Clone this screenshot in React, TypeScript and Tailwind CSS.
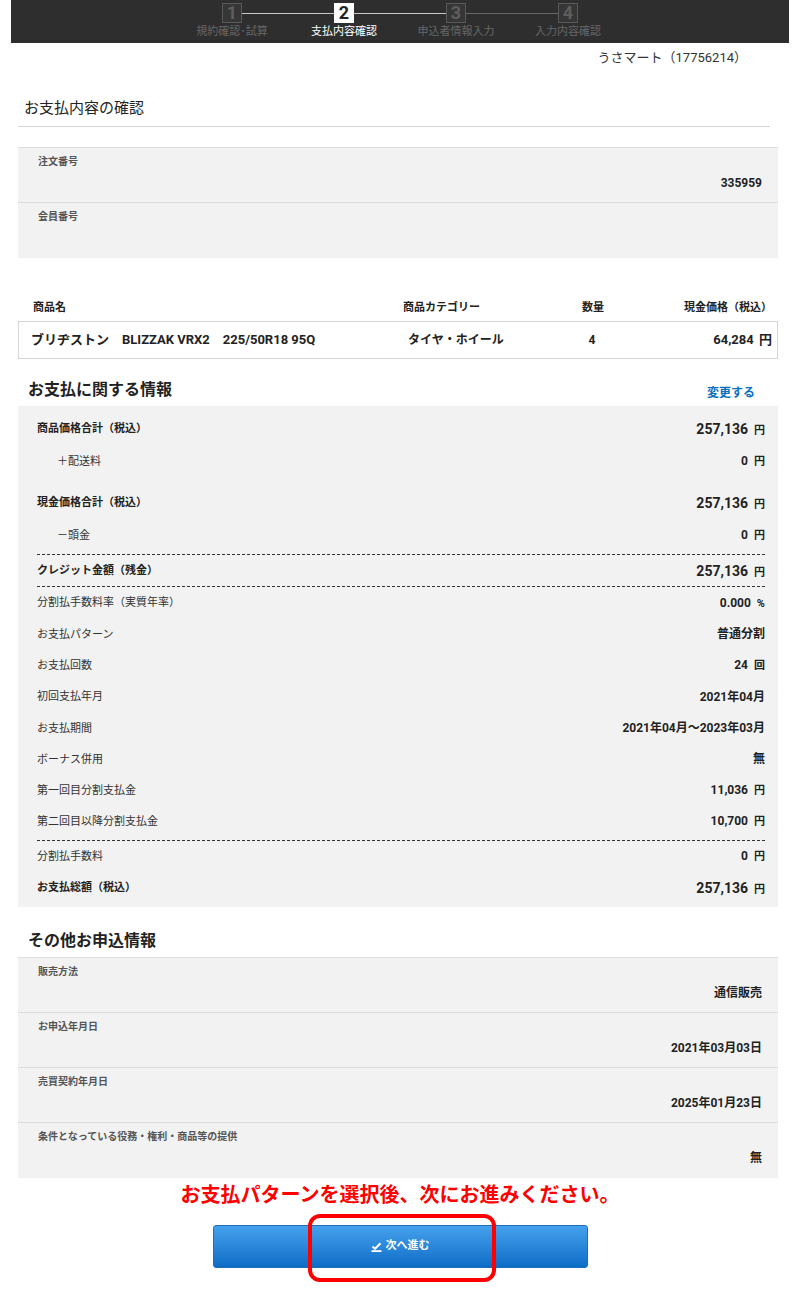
import { Fragment } from 'react';

const STEPS = [
  { no: '1', label: '規約確認･試算', state: 'done' },
  { no: '2', label: '支払内容確認', state: 'active' },
  { no: '3', label: '申込者情報入力', state: 'todo' },
  { no: '4', label: '入力内容確認', state: 'todo' },
];

function StepBar() {
  return (
    <div className="mx-[11px] h-[43px] bg-[#2e2e2e] pt-[3px]">
      <div className="flex items-center justify-center">
        {STEPS.map((s, i) => (
          <Fragment key={s.no}>
            {i > 0 && (
              <div className={i < 3 ? 'h-px w-[92px] bg-[#c8c8c8]' : 'h-px w-[92px] bg-[#666666]'} />
            )}
            <div
              className={
                s.state === 'active'
                  ? 'flex h-[20px] w-[20px] items-center justify-center bg-white text-[18px] font-bold leading-none text-[#222]'
                  : 'flex h-[20px] w-[20px] items-center justify-center border border-[#5a5a5a] bg-[#363636] text-[18px] font-bold leading-none text-[#5e5e5e]'
              }
            >
              {s.no}
            </div>
          </Fragment>
        ))}
      </div>
      <div className="mt-[2px] flex justify-center">
        {STEPS.map((s) => (
          <div
            key={s.no}
            className={
              s.state === 'active'
                ? 'w-[112px] text-center text-[11px] leading-[14px] text-white'
                : 'w-[112px] text-center text-[11px] leading-[14px] text-[#666]'
            }
          >
            {s.label}
          </div>
        ))}
      </div>
    </div>
  );
}

function InfoBox({ rows }: { rows: { label: string; value: string }[] }) {
  return (
    <div className="mx-[18px] w-[760px] border-t border-[#dddddd] bg-[#f2f2f2]">
      {rows.map((r, i) => (
        <div
          key={r.label}
          className={
            i < rows.length - 1
              ? 'h-[55px] border-b border-[#dddddd] pl-[20px] pr-[16px] pt-[7px]'
              : 'h-[55px] pl-[20px] pr-[16px] pt-[7px]'
          }
        >
          <div className="text-[10px] font-bold leading-[14px] text-[#555]">{r.label}</div>
          <div className="mt-[6px] h-[16px] text-right text-[12px] font-bold leading-[16px] text-[#222]">
            {r.value}
          </div>
        </div>
      ))}
    </div>
  );
}

type PayRowProps = {
  label: string;
  value: string;
  unit?: string;
  bold?: boolean;
  indent?: boolean;
  h: string;
};

function PayRow({ label, value, unit, bold, indent, h }: PayRowProps) {
  return (
    <div className={`flex items-center justify-between ${h}`}>
      <span
        className={
          bold
            ? 'text-[11px] font-bold leading-[14px] text-[#222]'
            : indent
              ? 'pl-[20px] text-[11px] leading-[14px] text-[#333]'
              : 'text-[11px] leading-[14px] text-[#333]'
        }
      >
        {label}
      </span>
      <span className="flex items-baseline font-bold text-[#222]">
        <span className={bold ? 'text-[14px] leading-[18px]' : 'text-[12px] leading-[15px]'}>{value}</span>
        {unit && <span className="ml-[6px] text-[11px] leading-[14px]">{unit}</span>}
      </span>
    </div>
  );
}

function Dash({ mt }: { mt: string }) {
  return <div className={`border-t border-dashed border-[#333] ${mt}`} />;
}

function CheckIcon() {
  return (
    <svg width="11" height="10" viewBox="0 0 11 10" className="mr-[4px]">
      <path d="M1.5 4.5 L4 6.8 L9.5 1.2" fill="none" stroke="white" strokeWidth="2" />
      <rect x="0.5" y="8.2" width="10" height="1.8" fill="white" />
    </svg>
  );
}

export default function App() {
  return (
    <div className="relative min-h-[1309px] w-[800px] bg-white font-['Roboto','Noto_Sans_CJK_JP',sans-serif] text-[#222]">
      <StepBar />

      <div className="mt-[5px] pr-[53px] text-right text-[13px] leading-[20px] text-[#333]">
        うさマート（17756214）
      </div>

      <div className="ml-[18px] mr-[30px] mt-[30px] border-b border-[#d6d6d6] pb-[8px] pl-[6px] text-[15px] leading-[20px] text-[#222]">
        お支払内容の確認
      </div>

      <div className="mt-[20px]">
        <InfoBox
          rows={[
            { label: '注文番号', value: '335959' },
            { label: '会員番号', value: '' },
          ]}
        />
      </div>

      {/* 商品テーブル */}
      <div className="mx-[18px] mt-[42px] w-[760px]">
        <div className="flex pl-[15px] text-[11px] font-bold leading-[16px] text-[#222]">
          <div className="w-[370px]">商品名</div>
          <div className="w-[140px]">商品カテゴリー</div>
          <div className="w-[100px] text-center">数量</div>
          <div className="flex-1 pr-[6px] text-right">現金価格（税込）</div>
        </div>
        <div className="mt-[5px] flex h-[38px] items-center border border-[#d6d6d6] pl-[12px] text-[13px] font-bold leading-[18px] text-[#222]">
          <div className="w-[377px]">ブリヂストン　BLIZZAK VRX2　225/50R18 95Q</div>
          <div className="w-[135px] text-[12px]">タイヤ・ホイール</div>
          <div className="w-[98px] text-center text-[12px]">4</div>
          <div className="flex-1 pr-[5px] text-right">
            64,284 <span className="ml-[2px]">円</span>
          </div>
        </div>
      </div>

      {/* お支払に関する情報 */}
      <div className="mx-[18px] mt-[21px] w-[760px]">
        <div className="mb-[6px] flex h-[20px] justify-between pl-[10px] pr-[23px]">
          <span className="text-[16px] font-bold leading-[20px] text-[#222]">お支払に関する情報</span>
          <span className="mt-[5px] text-[12px] font-bold leading-[16px] text-[#0b6fc0]">変更する</span>
        </div>
        <div className="bg-[#f2f2f2] pb-[3px] pl-[19px] pr-[13px] pt-[6px]">
          <PayRow h="h-[33px]" label="商品価格合計（税込）" value="257,136" unit="円" bold />
          <PayRow h="h-[33px]" label="＋配送料" value="0" unit="円" indent />
          <div className="h-[8px]" />
          <PayRow h="h-[33px]" label="現金価格合計（税込）" value="257,136" unit="円" bold />
          <PayRow h="h-[33px]" label="－頭金" value="0" unit="円" indent />
          <Dash mt="mt-[2px]" />
          <PayRow h="h-[31px]" label="クレジット金額（残金）" value="257,136" unit="円" bold />
          <Dash mt="mt-0" />
          <PayRow h="h-[32px]" label="分割払手数料率（実質年率）" value="0.000" unit="%" />
          <PayRow h="h-[31px]" label="お支払パターン" value="普通分割" />
          <PayRow h="h-[31px]" label="お支払回数" value="24" unit="回" />
          <PayRow h="h-[32px]" label="初回支払年月" value="2021年04月" />
          <PayRow h="h-[31px]" label="お支払期間" value="2021年04月～2023年03月" />
          <PayRow h="h-[31px]" label="ボーナス併用" value="無" />
          <PayRow h="h-[31px]" label="第一回目分割支払金" value="11,036" unit="円" />
          <PayRow h="h-[31px]" label="第二回目以降分割支払金" value="10,700" unit="円" />
          <Dash mt="mt-[3px]" />
          <PayRow h="h-[31px]" label="分割払手数料" value="0" unit="円" />
          <PayRow h="h-[32px]" label="お支払総額（税込）" value="257,136" unit="円" bold />
        </div>
      </div>

      {/* その他お申込情報 */}
      <div className="mt-[24px]">
        <div className="mx-[18px] mb-[6px] pl-[10px] text-[16px] font-bold leading-[20px] text-[#222]">
          その他お申込情報
        </div>
        <InfoBox
          rows={[
            { label: '販売方法', value: '通信販売' },
            { label: 'お申込年月日', value: '2021年03月03日' },
            { label: '売買契約年月日', value: '2025年01月23日' },
            { label: '条件となっている役務・権利・商品等の提供', value: '無' },
          ]}
        />
      </div>

      <div className="mt-[3px] text-center text-[20px] font-bold leading-[28px] text-[#ff0000]">
        お支払パターンを選択後、次にお進みください。
      </div>

      <div className="relative mx-auto mt-[16px] w-[375px]">
        <button className="flex h-[43px] w-full items-center justify-center rounded-[3px] border border-[#1b6fb8] bg-gradient-to-b from-[#45a1ec] to-[#0a6dc7] text-[11px] font-bold text-white">
          <CheckIcon />
          次へ進む
        </button>
        {/* 注釈の赤枠 */}
        <div className="pointer-events-none absolute left-[95px] top-[-11px] h-[68px] w-[188px] rounded-[12px] border-[4px] border-[#ff0000]" />
      </div>
    </div>
  );
}
